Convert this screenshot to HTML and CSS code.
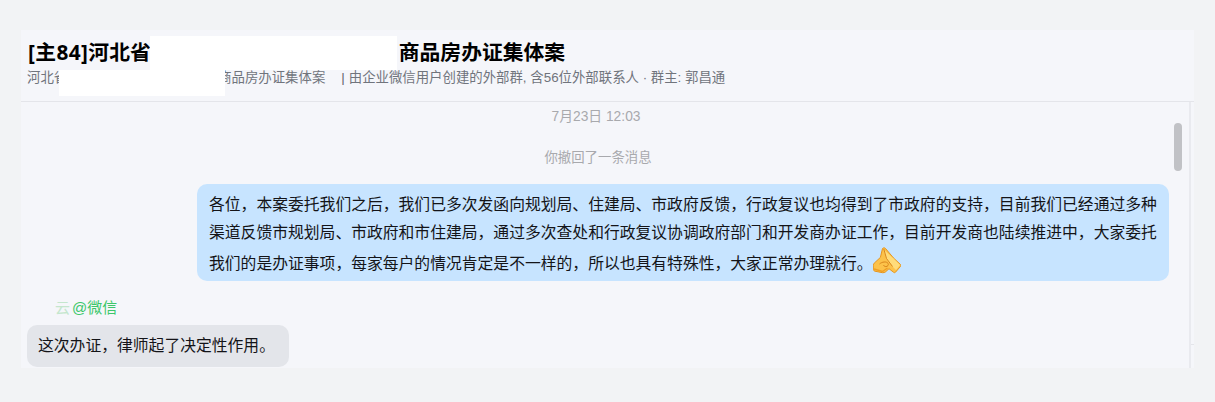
FILE: index.html
```html
<!DOCTYPE html>
<html lang="en">
<head>
    <meta charset="UTF-8">
    <meta name="viewport" content="width=device-width, initial-scale=1.0">
    <title>群聊</title>
    <link rel="stylesheet" href="styles.css">
</head>
<body>
    <div class="window">
        <div class="header">
            <h1 class="title"><span class="title-tag">[主84]</span>河北省<span class="title-gap"></span>商品房办证集体案</h1>
            <p class="subtitle">
                <span class="sub-name">河北省<span class="sub-gap"></span>商品房办证集体案</span>
                <span class="sub-bar">|</span>
                <span>由企业微信用户创建的外部群, 含56位外部联系人 · 群主: 郭昌通</span>
            </p>
            <div class="redact redact-title"></div>
            <div class="redact redact-sub"></div>
        </div>
        <div class="body">
            <div class="messages">
                <div class="time">7月23日 12:03</div>
                <div class="notice">你撤回了一条消息</div>
                <div class="bubble bubble-me">各位，本案委托我们之后，我们已多次发函向规划局、住建局、市政府反馈，行政复议也均得到了市政府的支持，目前我们已经通过多种渠道反馈市规划局、市政府和市住建局，通过多次查处和行政复议协调政府部门和开发商办证工作，目前开发商也陆续推进中，大家委托我们的是办证事项，每家每户的情况肯定是不一样的，所以也具有特殊性，大家正常办理就行。<svg class="emoji" viewBox="0 0 28 27"><path d="M9.500 1.500c1-1 2.500-.8 3.200.2l7.800 9.300 7 6.500c.5.600.5 1.300 0 1.900l-5 5.800c-.6.600-1.300.6-1.900.1l-4.600-3.600-3.500 3.200c-.8.600-2 .9-3 .8l-7.500-1.500c-1-.3-1.700-1-1.700-2v-4c0-.8.300-1.400.9-2l6.200-5.800z" fill="#fcc24a" stroke="#e6951f" stroke-width="1"/><path d="M10.500 2.500l3 9.500 6 7.500 3.500 3.500 4-5-7-7z" fill="#ffdc7a"/><path d="M10.800 2l2.700 9.500 6 8M6.500 17c2.500-2.300 7-2.800 8.500-.7 1 1.600-.3 3.300-2.200 3.300-1.200 0-2-.6-2.300-1.500" fill="none" stroke="#d9861c" stroke-width="1"/><path d="M1 22l8.500 2.500 5-3.500" fill="none" stroke="#ef9f26" stroke-width="1.500"/></svg></div>
                <div class="sender"><span class="sender-faint">云</span><span class="sender-at">@微信</span></div>
                <div class="bubble bubble-other">这次办证，律师起了决定性作用。</div>
                <div class="scroll-thumb"></div>
            </div>
            <div class="side">
                <div class="side-line"></div>
            </div>
        </div>
    </div>
</body>
</html>
```

FILE: styles.css
```css
body {
    background-color: #f2f3f5;
    margin: 0;
    height: 402px;
    overflow: hidden;
    padding: 30px 21px 0;
    box-sizing: border-box;
    font-family: "Liberation Sans", "Noto Sans CJK SC", sans-serif;
}
.window {
    background-color: #f5f6fa;
    height: 338px;
    display: flex;
    flex-direction: column;
    overflow: hidden;
}
.header {
    height: 72px;
    flex: none;
    position: relative;
    padding: 7px 0 0 7px;
    box-sizing: border-box;
    border-bottom: 1px solid #e4e5ea;
}
.title {
    margin: 0;
    font-family: "Noto Sans", "Noto Sans CJK SC", sans-serif;
    font-size: 20.8px;
    line-height: 31px;
    font-weight: bold;
    color: #000;
}
.title-tag {
    letter-spacing: .4px;
}
.title-gap {
    display: inline-block;
    width: 248px;
}
.subtitle {
    margin: 1px 0 0 -1px;
    font-size: 13.4px;
    line-height: 18px;
    color: #70747c;
    display: flex;
}
.sub-gap {
    display: inline-block;
    width: 151px;
}
.sub-bar {
    margin: 0 4px 0 16px;
    color: #5f636c;
}
.redact {
    position: absolute;
    background-color: #fff;
}
.redact-title {
    left: 129px;
    top: 6px;
    width: 247px;
    height: 34px;
}
.redact-sub {
    left: 38px;
    top: 40px;
    width: 166px;
    height: 26px;
}
.body {
    flex: 1;
    display: flex;
    min-height: 0;
}
.messages {
    flex: 1;
    position: relative;
    border-right: 2px solid #e9eaef;
    padding: 0 20px 0 6px;
}
.time {
    text-align: center;
    font-size: 13.8px;
    line-height: 18px;
    margin: 6px 4px 0 0;
    color: #a8a9ad;
}
.notice {
    text-align: center;
    font-size: 13.4px;
    line-height: 18px;
    margin: 23px 0 0;
    color: #a8a9ad;
}
.bubble {
    font-size: 15.8px;
    line-height: 28px;
    color: #141418;
    border-radius: 10px;
}
.bubble-me {
    background-color: #c7e4ff;
    margin: 17px 0 0 170px;
    padding: 7px 12px 6px 12px;
    height: 84px;
}
.bubble-other {
    background-color: #e3e5ea;
    width: fit-content;
    padding: 6px 14px 6px 11px;
    line-height: 30px;
}
.emoji {
    width: 28px;
    height: 27px;
    vertical-align: -5px;
    margin-left: 1px;
}
.sender {
    margin: 16px 0 6px 28px;
    font-size: 15px;
    line-height: 22px;
}
.sender-faint {
    color: #c4e6cd;
    margin-right: 2px;
}
.sender-at {
    color: #3cc76a;
}
.scroll-thumb {
    position: absolute;
    right: 7px;
    top: 21px;
    width: 8px;
    height: 48px;
    border-radius: 4px;
    background-color: #c1c2c6;
}
.side {
    width: 3px;
    flex: none;
}
.side-line {
    height: 1px;
    margin-top: 242px;
    background-color: #e4e5ea;
}
```
